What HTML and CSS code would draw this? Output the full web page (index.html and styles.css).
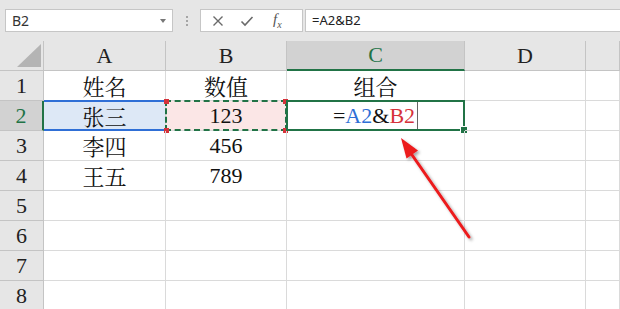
FILE: index.html
```html
<!DOCTYPE html>
<html lang="zh-CN">
<head>
    <meta charset="utf-8">
    <title>Excel 组合</title>
    <link rel="stylesheet" href="styles.css">
</head>
<body>
    <header class="formula-bar">
        <div class="name-box">
            <span>B2</span>
            <span class="drop-arrow"></span>
        </div>
        <div class="grip"><i></i><i></i><i></i></div>
        <div class="fx-buttons">
            <svg class="fx-icon" width="12" height="12" viewBox="0 0 12 12"><path d="M1.5 1.5 L10.5 10.5 M10.5 1.5 L1.5 10.5" stroke="#6a6a6a" stroke-width="1.4" fill="none"/></svg>
            <svg class="fx-icon" width="14" height="12" viewBox="0 0 14 12"><path d="M1.5 6.5 L5 10 L12.5 2" stroke="#6a6a6a" stroke-width="1.6" fill="none"/></svg>
            <span class="fx-label">f<sub>x</sub></span>
        </div>
        <div class="formula-input">=A2&amp;B2</div>
    </header>

    <main class="sheet">
        <div class="corner"></div>
        <div class="col-head">A</div>
        <div class="col-head">B</div>
        <div class="col-head active">C</div>
        <div class="col-head">D</div>
        <div class="col-head"></div>

        <div class="row-head">1</div>
        <div class="cell">姓名</div>
        <div class="cell">数值</div>
        <div class="cell">组合</div>
        <div class="cell"></div>
        <div class="cell"></div>

        <div class="row-head active">2</div>
        <div class="cell ref-a">张三</div>
        <div class="cell ref-b num">123</div>
        <div class="cell editing num">=<span class="blue">A2</span>&amp;<span class="red">B2</span><span class="caret"></span></div>
        <div class="cell"></div>
        <div class="cell"></div>

        <div class="row-head">3</div>
        <div class="cell">李四</div>
        <div class="cell num">456</div>
        <div class="cell"></div>
        <div class="cell"></div>
        <div class="cell"></div>

        <div class="row-head">4</div>
        <div class="cell">王五</div>
        <div class="cell num">789</div>
        <div class="cell"></div>
        <div class="cell"></div>
        <div class="cell"></div>

        <div class="row-head">5</div>
        <div class="cell"></div><div class="cell"></div><div class="cell"></div><div class="cell"></div><div class="cell"></div>
        <div class="row-head">6</div>
        <div class="cell"></div><div class="cell"></div><div class="cell"></div><div class="cell"></div><div class="cell"></div>
        <div class="row-head">7</div>
        <div class="cell"></div><div class="cell"></div><div class="cell"></div><div class="cell"></div><div class="cell"></div>
        <div class="row-head">8</div>
        <div class="cell"></div><div class="cell"></div><div class="cell"></div><div class="cell"></div><div class="cell"></div>
    </main>

    <!-- annotation arrow drawn over the sheet -->
    <svg class="arrow" width="620" height="309" viewBox="0 0 620 309">
        <defs>
            <filter id="shadow" x="-20%" y="-20%" width="140%" height="140%">
                <feDropShadow dx="2" dy="2" stdDeviation="1.5" flood-color="#000" flood-opacity="0.35"/>
            </filter>
        </defs>
        <g filter="url(#shadow)">
            <line x1="469" y1="237" x2="410" y2="152" stroke="#ec1a1e" stroke-width="3" stroke-linecap="round"/>
            <polygon points="401,138 418,150.5 406.5,158.5" fill="#ec1a1e"/>
        </g>
    </svg>
</body>
</html>
```

FILE: styles.css
```css
* {
    box-sizing: border-box;
    margin: 0;
    padding: 0;
}

body {
    width: 620px;
    height: 309px;
    overflow: hidden;
    background: #fff;
    position: relative;
    font-family: "Noto Sans", "Liberation Sans", sans-serif;
}

/* Formula bar */
.formula-bar {
    height: 41px;
    background: #e6e6e6;
    display: flex;
    align-items: center;
    padding-left: 5px;
}

.name-box {
    width: 168px;
    height: 23px;
    background: #fff;
    border: 1px solid #c6c6c6;
    display: flex;
    align-items: center;
    justify-content: space-between;
    padding: 0 6px 0 6px;
    font-size: 14px;
    color: #333;
}

.drop-arrow {
    width: 0;
    height: 0;
    border-left: 3px solid transparent;
    border-right: 3px solid transparent;
    border-top: 4px solid #777;
}

.grip {
    width: 27px;
    display: flex;
    flex-direction: column;
    align-items: center;
    gap: 2px;
}

.grip i {
    width: 2px;
    height: 2px;
    background: #a5a5a5;
}

.fx-buttons {
    width: 103px;
    height: 23px;
    background: #fff;
    border: 1px solid #c6c6c6;
    display: flex;
    align-items: center;
    padding-left: 11px;
    gap: 16px;
}

.fx-label {
    font-family: "Liberation Serif", serif;
    font-style: italic;
    font-size: 15px;
    color: #555;
    margin-left: 3px;
}

.fx-label sub {
    font-size: 10px;
}

.formula-input {
    flex: 1;
    height: 23px;
    margin-left: 2px;
    background: #fff;
    border: 1px solid #c6c6c6;
    border-right: none;
    font-size: 13px;
    line-height: 21px;
    padding-left: 6px;
    color: #222;
}

/* Sheet grid */
.sheet {
    display: grid;
    grid-template-columns: 44px 122px 121px 178px 121px 1fr;
    grid-auto-rows: 30px;
    font-family: "Liberation Serif", "Noto Serif CJK SC", "Noto Sans CJK SC", serif;
    font-size: 22px;
    color: #111;
}

.num {
    font-family: "Liberation Serif", serif;
}

.corner {
    background: #e6e6e6;
    border-right: 1px solid #c4c4c4;
    border-bottom: 1px solid #c4c4c4;
    position: relative;
}

.corner::after {
    content: "";
    position: absolute;
    right: 2px;
    bottom: 3px;
    width: 0;
    height: 0;
    border-left: 24px solid transparent;
    border-bottom: 23px solid #b4b4b4;
}

.col-head,
.row-head {
    background: #e6e6e6;
    border-right: 1px solid #c4c4c4;
    border-bottom: 1px solid #c4c4c4;
    display: flex;
    align-items: center;
    justify-content: center;
    color: #222;
}

.col-head.active {
    background: #d2d2d2;
    color: #217346;
    border-bottom: 2px solid #217346;
}

.row-head.active {
    background: #d2d2d2;
    color: #217346;
    border-right: 2px solid #217346;
}

.cell {
    border-right: 1px solid #dadada;
    border-bottom: 1px solid #dadada;
    display: flex;
    align-items: center;
    justify-content: center;
    position: relative;
}

/* A2: referenced range (blue) */
.ref-a {
    background: #dde8f6;
}

.ref-a::before {
    content: "";
    position: absolute;
    left: 0;
    right: -1px;
    top: -1px;
    bottom: -1px;
    border-top: 2px solid #2f6fd6;
    border-bottom: 2px solid #2f6fd6;
}

/* B2: referenced range (marching ants) */
.ref-b {
    background: #fbe6e6;
}

.ref-b::before {
    content: "";
    position: absolute;
    left: -1px;
    right: -1px;
    top: -1px;
    bottom: -1px;
    border: 2px dashed #217346;
}

.ref-b::after {
    content: "";
    position: absolute;
    left: -2px;
    top: -2px;
    width: 5px;
    height: 5px;
    background: #d6323a;
    box-shadow: 119px 0 #d6323a, 0 29px #d6323a, 119px 29px #d6323a;
}

/* C2: active cell being edited */
.editing::before {
    content: "";
    position: absolute;
    left: -1px;
    right: -1px;
    top: -1px;
    bottom: -1px;
    border: 2px solid #217346;
}

.editing::after {
    content: "";
    position: absolute;
    right: -4px;
    bottom: -4px;
    width: 6px;
    height: 6px;
    background: #217346;
    border: 1px solid #fff;
}

.blue {
    color: #2f6fd6;
}

.red {
    color: #d6323a;
}

.caret {
    width: 1px;
    height: 27px;
    background: #666;
    margin-left: 2px;
}

/* Annotation */
.arrow {
    position: absolute;
    left: 0;
    top: 0;
    pointer-events: none;
}
```
